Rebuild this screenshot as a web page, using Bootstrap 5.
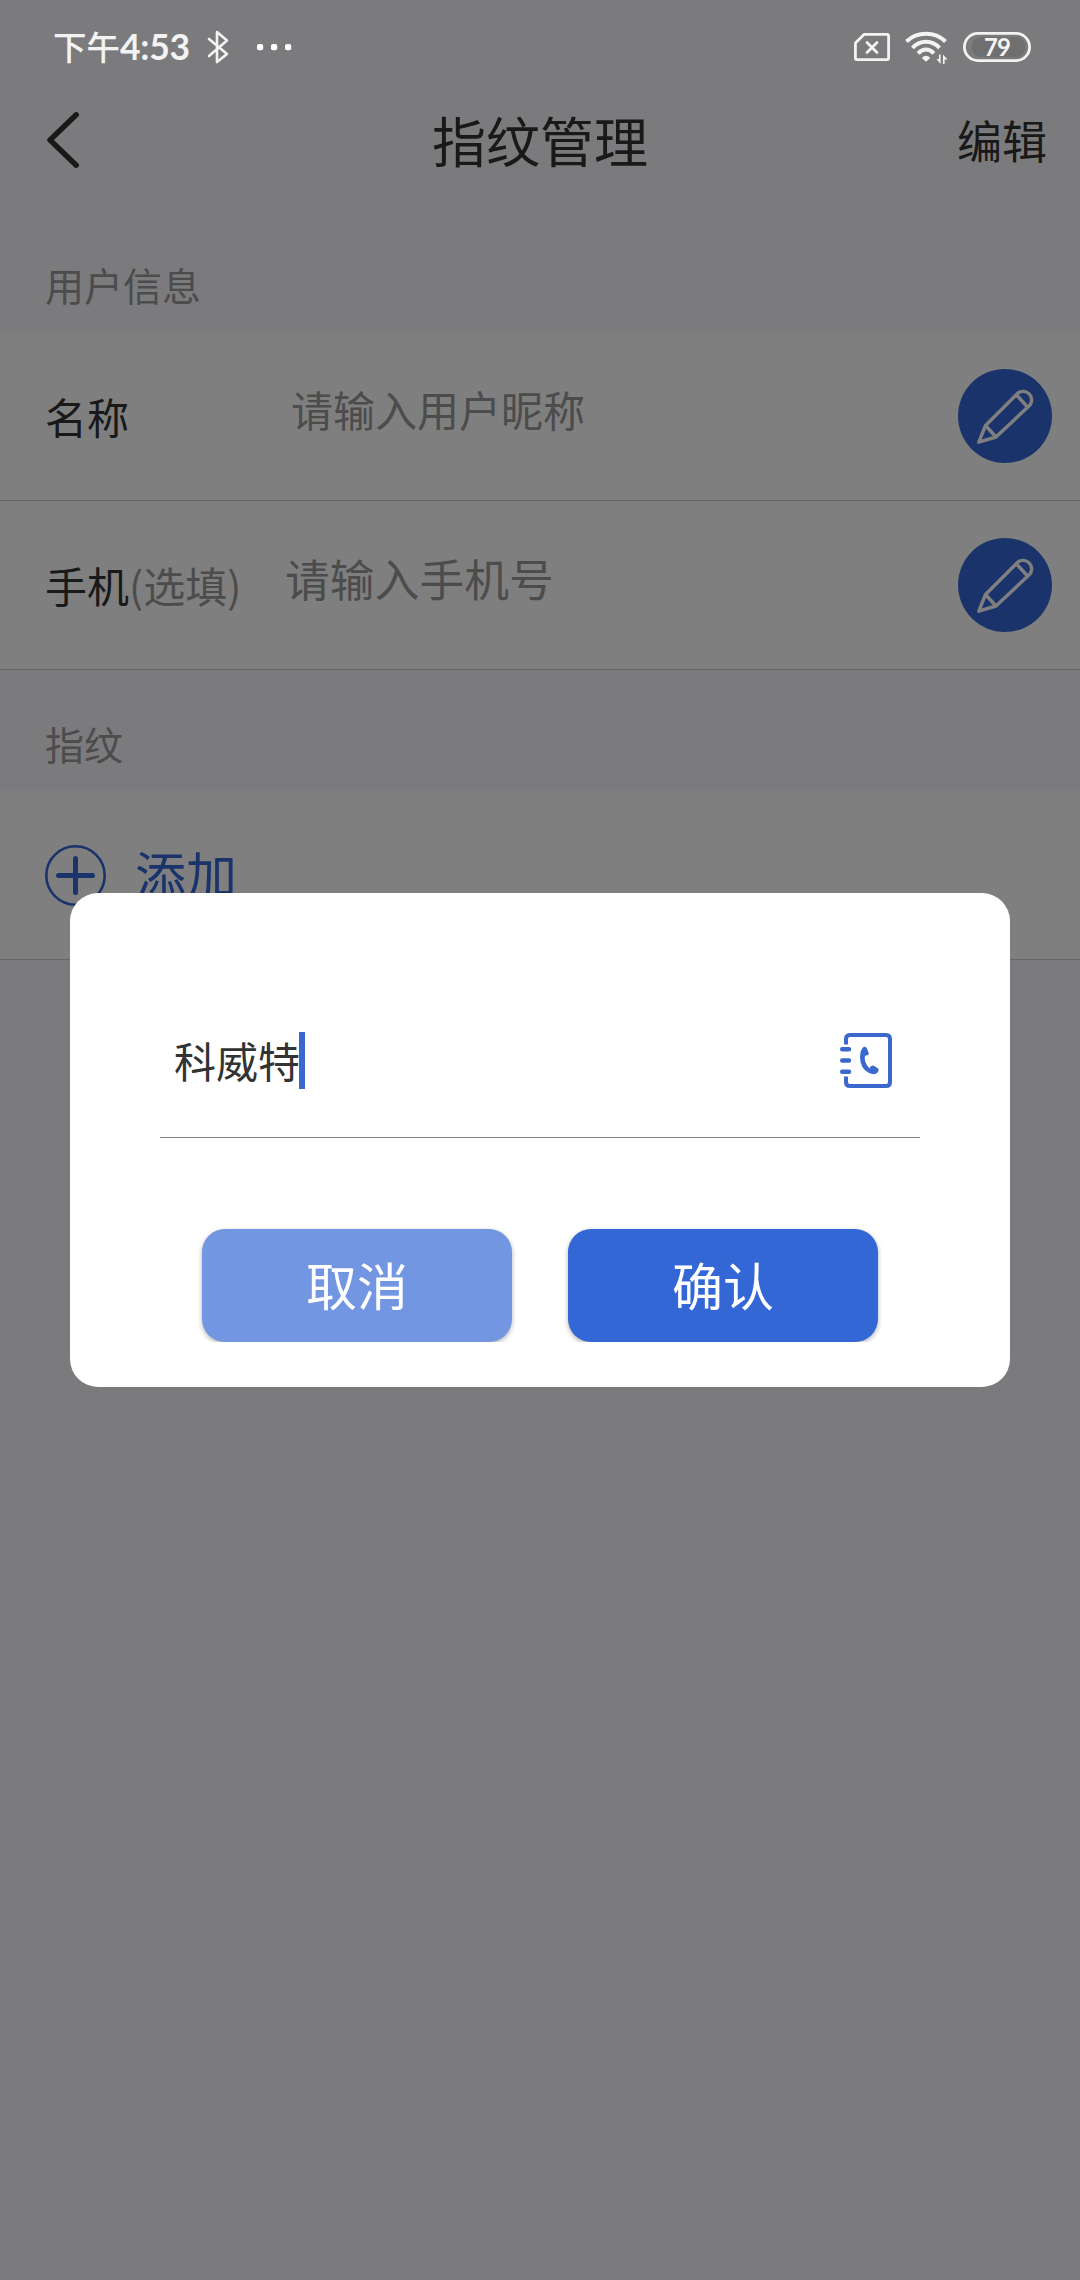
<!DOCTYPE html>
<html lang="zh-CN">
<head>
<meta charset="utf-8">
<meta name="viewport" content="width=device-width, initial-scale=1">
<title>指纹管理</title>
<link href="https://cdn.jsdelivr.net/npm/bootstrap@5.3.0/dist/css/bootstrap.min.css" rel="stylesheet">
<style>
  body { font-family: "Noto Sans CJK SC", sans-serif; background: #f7f7fa; color: #333; line-height: 1.2; font-size: 42px; }
  svg { display: block; flex: none; }
  .screen { width: 1080px; height: 2280px; }
  .statusbar { height: 94px; padding: 0 49px 0 53px; color: #f3f3f3; z-index: 30; }
  .clock { font-size: 33.5px; font-weight: 500; width: 154px; white-space: nowrap; }
  .clock span { font-family: Lato, sans-serif; font-weight: 700; font-size: 35.5px; letter-spacing: -.3px; }
  .titlebar { height: 117px; padding: 0 33px 25px 47px; }
  .titlebar > * { width: 140px; }
  .titlebar .page-title { flex: 1; font-size: 54px; font-weight: 400; text-align: center; padding-right: 14px; }
  .edit-link { font-size: 45px; }
  .section-label { height: 121px; font-size: 39px; color: #999; padding: 26px 45px 0; }
  .cell { height: 169px; padding: 0 28px 0 45px; background: #fff; border-bottom: 1px solid #ccc; }
  .cell-label { width: 246px; white-space: nowrap; }
  .cell-label.narrow { width: 240px; }
  .hint { color: #999; }
  .cell-hint { padding-bottom: 14px; }
  .cell-hint.large { font-size: 44.8px; }
  .edit-btn { width: 94px; height: 94px; background: #3467d6; border-radius: 50%; }
  .add-text { font-size: 51px; color: #3467d6; margin-left: 29px; padding-bottom: 2px; }
  .shade { background: rgba(0,0,0,.5); z-index: 20; }
  .dialog-box { width: 940px; height: 494px; margin: 893px auto 0; background: #fff; border-radius: 28px; padding: 90px 90px 0; }
  .field { height: 155px; padding: 0 28px 0 14px; border-bottom: 1px solid #808080; }
  .caret { width: 6px; height: 57px; background: #3a68cc; margin-left: -1px; }
  .dialog-actions { padding: 91px 42px 0; gap: 56px; }
  .dlg-btn { width: 310px; height: 113px; border: 0; border-radius: 23px; font-size: 51px; line-height: 1.2; color: #fff; padding: 0 0 2px; box-shadow: 0 2px 5px rgba(0,0,0,.3); clip-path: inset(-6px -6px 0 -6px); }
  .dlg-cancel { background: #7296e1; }
  .dlg-ok { background: #3467d6; }
</style>
</head>
<body>
<div class="screen position-relative overflow-hidden">
  <div class="statusbar position-relative d-flex align-items-center">
    <div class="clock">下午<span>4:53</span></div>
    <svg width="22" height="36" viewBox="0 0 22 36" fill="none" stroke="#f3f3f3" stroke-width="2.6" stroke-linejoin="round" stroke-linecap="round"><path d="M2 10 20 25 10 33V3L20 11.500 2 27"/></svg>
    <svg class="ms-4" width="44" height="10" viewBox="0 0 44 10" fill="#fff"><rect x="4" y="2" width="6.200" height="6.200" rx="2"/><rect x="18" y="2" width="6.200" height="6.200" rx="2"/><rect x="32" y="2" width="6.200" height="6.200" rx="2"/></svg>
    <svg class="ms-auto" width="36" height="28" viewBox="0 0 36 28" fill="none" stroke="#f3f3f3" stroke-width="2.800"><path d="M10 1.400H33Q34.600 1.400 34.600 3V25Q34.600 26.600 33 26.600H3Q1.400 26.600 1.400 25V10Z" stroke-linejoin="round"/><path d="M13 9.500 23 19.500M23 9.500 13 19.500" stroke-linecap="round"/></svg>
    <svg width="43" height="34" viewBox="0 0 43 34" fill="none" stroke="#f3f3f3" stroke-width="4" style="margin:2px 15px 0"><path d="M1.500 10.500Q9.500 2.800 21 2.800T40.500 10.500M7.500 17Q13 10.800 21 10.800T34.500 17M13.200 22.500Q16.500 18.600 21 18.600T28.800 22.500"/><path d="M16.800 27Q21 22.500 25.200 27L21 30.800Z" fill="#f3f3f3" stroke="none"/><path d="M35.600 23.500V33L31.500 28H34V23.500ZM38 33V23.500L42.500 28.500H39.600V33Z" fill="#f3f3f3" stroke="none"/></svg>
    <svg width="68" height="30" viewBox="0 0 68 30"><rect x="9" y="5" width="53" height="20" rx="9" fill="#6f6f70"/><rect x="1.400" y="1.400" width="65.200" height="27.200" rx="13.600" fill="none" stroke="#f3f3f3" stroke-width="2.800"/><text x="34" y="23.500" text-anchor="middle" font-family="Lato, sans-serif" font-weight="700" font-size="24" letter-spacing="-1" fill="#f3f3f3">79</text></svg>
  </div>

  <header class="titlebar d-flex align-items-center">
    <div><svg width="32" height="56" viewBox="0 0 32 56" fill="none" stroke="#333" stroke-width="5.400" stroke-linecap="round" stroke-linejoin="round"><path d="M29.200 2.800 3 28 29.200 53.200"/></svg></div>
    <h1 class="page-title mb-0">指纹管理</h1>
    <div class="edit-link text-end">编辑</div>
  </header>

  <div class="section-label d-flex align-items-center">用户信息</div>
  <div class="cell d-flex align-items-center">
    <div class="cell-label">名称</div>
    <div class="cell-hint hint">请输入用户昵称</div>
    <div class="edit-btn ms-auto"><svg width="94" height="94" viewBox="0 0 94 94" fill="none" stroke="#fff" stroke-width="3.400" stroke-linejoin="round"><path d="M20.800 73.200 27.500 56.500 60 24A8.600 8.600 0 0 1 72 36L38 68ZM27.500 56.500 38 68M58.500 26 69.500 38"/></svg></div>
  </div>
  <div class="cell d-flex align-items-center">
    <div class="cell-label narrow">手机<span class="hint">(选填)</span></div>
    <div class="cell-hint large hint">请输入手机号</div>
    <div class="edit-btn ms-auto"><svg width="94" height="94" viewBox="0 0 94 94" fill="none" stroke="#fff" stroke-width="3.400" stroke-linejoin="round"><path d="M20.800 73.200 27.500 56.500 60 24A8.600 8.600 0 0 1 72 36L38 68ZM27.500 56.500 38 68M58.500 26 69.500 38"/></svg></div>
  </div>

  <div class="section-label d-flex align-items-center">指纹</div>
  <div class="cell d-flex align-items-center">
    <svg width="61" height="61" viewBox="0 0 61 61" fill="none" stroke="#3467d6"><circle cx="30.500" cy="30.500" r="29.200" stroke-width="2.600"/><path d="M30.500 13.500V47.500M13.500 30.500H47.500" stroke-width="5" stroke-linecap="round"/></svg>
    <div class="add-text">添加</div>
  </div>

  <div class="shade position-absolute top-0 start-0 w-100 h-100 overflow-hidden">
    <div class="dialog-box" role="dialog">
      <div class="field d-flex align-items-center">
        <div class="field-text">科威特</div>
        <div class="caret"></div>
        <svg class="ms-auto" width="52" height="55" viewBox="0 0 52 55" fill="none" stroke="#3a68cc" stroke-width="4"><path d="M6 11.500V6Q6 2 10 2H46Q50 2 50 6V49Q50 53 46 53H10Q6 53 6 49V43.500"/><path d="M2.200 16.300H9M2.200 27.500H9M2.200 38.800H9" stroke-linecap="round" stroke-width="4.400"/><path d="M23.500 14Q26 13 27 15.500L28.800 20.500Q28.500 22.500 25 22.800Q23.500 29 29.500 35.500Q30.500 32.500 33.500 32.600L38 35.500Q39.500 37 37.500 39.500Q35 42.500 29 40Q20 35.500 20 24Q20.500 16 23.500 14Z" fill="#3a68cc" stroke="none"/></svg>
      </div>
      <div class="dialog-actions d-flex">
        <button type="button" class="btn dlg-btn dlg-cancel">取消</button>
        <button type="button" class="btn dlg-btn dlg-ok">确认</button>
      </div>
    </div>
  </div>
</div>
<script src="https://cdn.jsdelivr.net/npm/bootstrap@5.3.0/dist/js/bootstrap.bundle.min.js"></script>
</body>
</html>
